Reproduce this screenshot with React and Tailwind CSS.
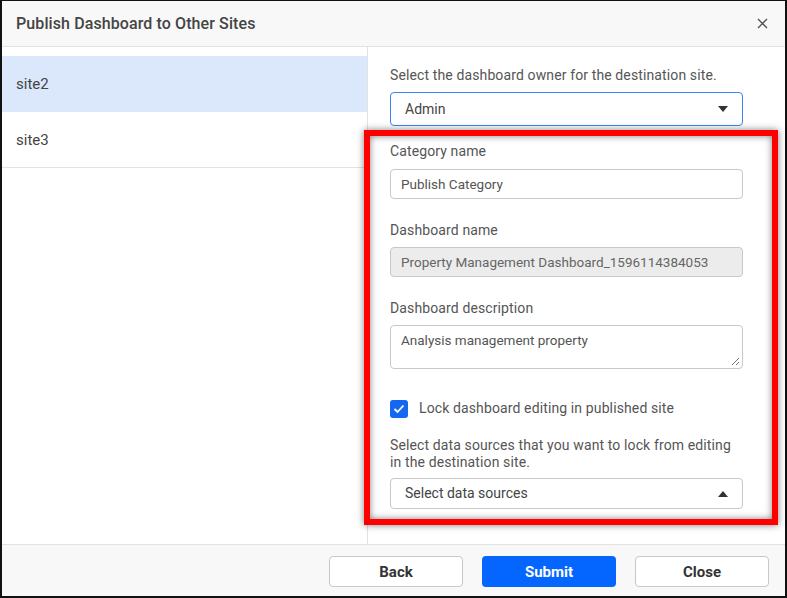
import React from 'react';

const sites = [
    { name: 'site2', active: true },
    { name: 'site3', active: false },
];

function Caret({ up }) {
    return (
        <svg width="10" height="6" viewBox="0 0 10 6" className={up ? 'rotate-180' : ''}>
            <path d="M0 0 L10 0 L5 6 Z" fill="#333" />
        </svg>
    );
}

function Label({ children }) {
    return <div className="text-[14px] leading-[20px] tracking-[0.12px] text-[#555]">{children}</div>;
}

export default function App() {
    return (
        <div className="w-[787px] h-[598px] bg-white border-t border-l-2 border-r-2 border-b-2 border-[#111] flex flex-col font-['Roboto',sans-serif] relative">
            {/* Header */}
            <div className="h-[46px] shrink-0 bg-[#f8f8f8] border-b border-[#e2e2e2] flex items-center justify-between pl-[14px] pr-[17px]">
                <h1 className="text-[16px] font-medium text-[#444] tracking-[0.1px]">Publish Dashboard to Other Sites</h1>
                <svg width="11" height="11" viewBox="0 0 11 11">
                    <path d="M1 1 L10 10 M10 1 L1 10" stroke="#555" strokeWidth="1.4" />
                </svg>
            </div>

            {/* Body */}
            <div className="flex-1 flex min-h-0">
                <div className="w-[366px] shrink-0 border-r border-[#e2e2e2] pt-[9px]">
                    {sites.map((s) => (
                        <div
                            key={s.name}
                            className={`h-[56px] flex items-center px-[14px] pt-[2px] text-[15px] text-[#444] border-b ${s.active ? 'bg-[#dbe8fb] border-[#dbe8fb]' : 'bg-white border-[#e2e2e2]'}`}
                        >
                            {s.name}
                        </div>
                    ))}
                </div>

                <div className="flex-1 pl-[22px] pt-[18px]">
                    <Label>Select the dashboard owner for the destination site.</Label>
                    <div className="mt-[7px] w-[353px] h-[34px] border border-[#3b82f6] rounded-[4px] flex items-center justify-between pl-[14px] pr-[14px] text-[14px] text-[#444]">
                        <span>Admin</span>
                        <Caret />
                    </div>

                    <div className="mt-[15px]"><Label>Category name</Label></div>
                    <div className="mt-[8px] w-[353px] h-[30px] border border-[#c8c8c8] rounded-[4px] flex items-center pl-[10px] text-[13.5px] text-[#555]">
                        Publish Category
                    </div>

                    <div className="mt-[21px]"><Label>Dashboard name</Label></div>
                    <div className="mt-[7px] w-[353px] h-[30px] border border-[#c8c8c8] bg-[#ececec] rounded-[4px] flex items-center pl-[10px] text-[13.5px] text-[#666]">
                        Property Management Dashboard_1596114384053
                    </div>

                    <div className="mt-[21px]"><Label>Dashboard description</Label></div>
                    <div className="mt-[7px] w-[353px] h-[44px] border border-[#c8c8c8] rounded-[4px] pl-[10px] pt-[4px] text-[13.5px] text-[#555] relative">
                        Analysis management property
                        <svg width="9" height="9" viewBox="0 0 9 9" className="absolute right-[2px] bottom-[2px]">
                            <path d="M8 1 L1 8 M8 5 L5 8" stroke="#777" strokeWidth="1" />
                        </svg>
                    </div>

                    <div className="mt-[29px] flex items-center gap-[11px]">
                        <div className="w-[18px] h-[18px] rounded-[3px] bg-[#1467f0] flex items-center justify-center">
                            <svg width="12" height="10" viewBox="0 0 12 10">
                                <path d="M1.5 5 L4.5 8 L10.5 1.5" stroke="#fff" strokeWidth="1.8" fill="none" />
                            </svg>
                        </div>
                        <span className="text-[14px] tracking-[0.12px] text-[#555]">Lock dashboard editing in published site</span>
                    </div>

                    <div className="mt-[18px] w-[353px] text-[14px] leading-[17px] tracking-[0.12px] text-[#555]">
                        Select data sources that you want to lock from editing in the destination site.
                    </div>
                    <div className="mt-[7px] w-[353px] h-[31px] border border-[#c8c8c8] rounded-[4px] flex items-center justify-between pl-[14px] pr-[14px] text-[14px] text-[#444]">
                        <span>Select data sources</span>
                        <Caret up />
                    </div>
                </div>
            </div>

            {/* Footer */}
            <div className="h-[52px] shrink-0 bg-[#f8f8f8] border-t border-[#e2e2e2] flex items-start justify-end gap-[19px] pt-[11px] pr-[16px]">
                <button className="w-[134px] h-[31px] pt-[2px] rounded-[4px] border border-[#c8c8c8] bg-white text-[15px] font-bold text-[#333]">Back</button>
                <button className="w-[134px] h-[31px] pt-[2px] rounded-[4px] bg-[#0566ff] text-[15px] font-bold text-white">Submit</button>
                <button className="w-[134px] h-[31px] pt-[2px] rounded-[4px] border border-[#c8c8c8] bg-white text-[15px] font-bold text-[#333]">Close</button>
            </div>

            {/* Highlight annotation */}
            <div className="absolute left-[362px] top-[129px] w-[414px] h-[395px] border-[6px] border-[#ff0000] shadow-[inset_0_0_7px_rgba(0,0,0,0.5),0_0_7px_rgba(0,0,0,0.5)] pointer-events-none" />
        </div>
    );
}
